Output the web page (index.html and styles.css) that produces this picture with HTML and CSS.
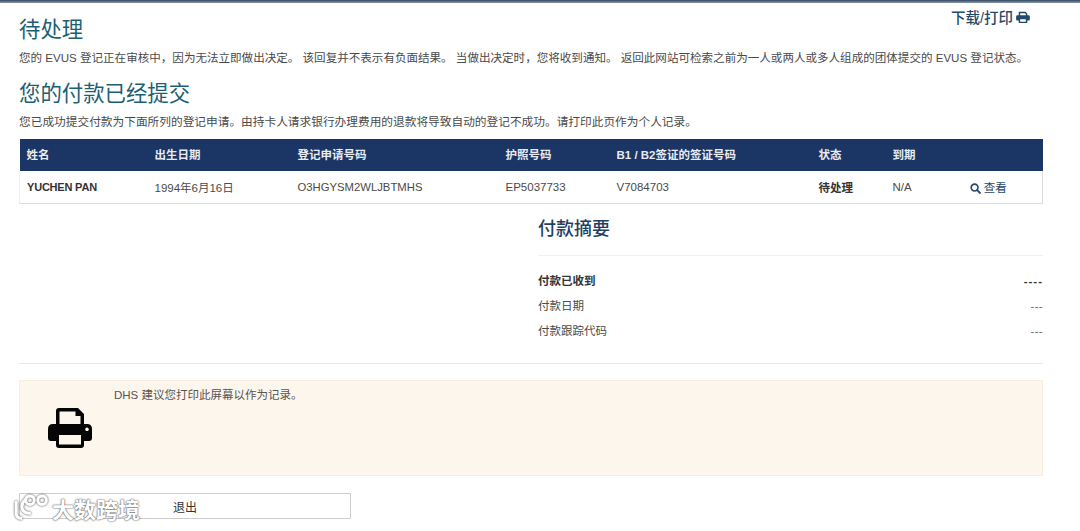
FILE: index.html
```html
<!DOCTYPE html>
<html lang="zh-CN">
<head>
    <meta charset="UTF-8">
    <title>EVUS 待处理</title>
    <link rel="stylesheet" href="styles.css">
</head>
<body>
    <div class="top-bar"></div>

    <div class="page">
        <a class="print-link">下载/打印
            <svg class="print-small" viewBox="0 0 16 14"><path d="M3 5V1h8l2 2v2h1.500q1.500 0 1.500 1.500V10q0 1-1 1h-2v3H3v-3H1q-1 0-1-1V6.500Q0 5 1.500 5zm1.700 0h6.600V3.500L10.500 2.700H4.700zM4.700 9.500v3h6.600v-3z" fill-rule="evenodd"/></svg>
        </a>

        <h1 class="title first">待处理</h1>
        <p class="text wide">您的 EVUS 登记正在审核中，因为无法立即做出决定。 该回复并不表示有负面结果。 当做出决定时，您将收到通知。 返回此网站可检索之前为一人或两人或多人组成的团体提交的 EVUS 登记状态。</p>

        <h1 class="title second">您的付款已经提交</h1>
        <p class="text roomy">您已成功提交付款为下面所列的登记申请。由持卡人请求银行办理费用的退款将导致自动的登记不成功。请打印此页作为个人记录。</p>

        <table class="results">
            <thead>
                <tr>
                    <th class="c-name">姓名</th>
                    <th class="c-dob">出生日期</th>
                    <th class="c-app">登记申请号码</th>
                    <th class="c-pass">护照号码</th>
                    <th class="c-visa">B1 / B2签证的签证号码</th>
                    <th class="c-status">状态</th>
                    <th class="c-exp">到期</th>
                    <th></th>
                </tr>
            </thead>
            <tbody>
                <tr>
                    <td class="strong name">YUCHEN PAN</td>
                    <td>1994年6月16日</td>
                    <td class="code">O3HGYSM2WLJBTMHS</td>
                    <td>EP5037733</td>
                    <td>V7084703</td>
                    <td class="strong">待处理</td>
                    <td>N/A</td>
                    <td class="view">
                        <svg class="search-icon" viewBox="0 0 12 12"><circle cx="5" cy="5" r="3.700" fill="none" stroke="currentColor" stroke-width="1.800"/><path d="M7.800 7.800l3 3" stroke="currentColor" stroke-width="2.200" stroke-linecap="round"/></svg>
                        查看
                    </td>
                </tr>
            </tbody>
        </table>

        <div class="summary">
            <h2>付款摘要</h2>
            <div class="summary-row bold"><span>付款已收到</span><span class="dashes">----</span></div>
            <div class="summary-row"><span>付款日期</span><span class="dashes">---</span></div>
            <div class="summary-row"><span>付款跟踪代码</span><span class="dashes">---</span></div>
        </div>

        <div class="notice">
            <svg class="print-big" viewBox="0 0 44 40"><path fill-rule="evenodd" d="M8 16V3q0-3 3-3h19l6 6v10h3q5 0 5 5v9q0 3-3 3h-5v4q0 3-3 3H11q-3 0-3-3v-4H3q-3 0-3-3v-9q0-5 5-5zm3.500 0h21V8h-5V3.500h-16zM11 27v9.500h22V27zm28-7.500a1.800 1.800 0 1 0 .01 0z"/></svg>
            <p>DHS 建议您打印此屏幕以作为记录。</p>
        </div>

        <button class="logout">退出</button>
    </div>

    <div class="watermark">
        <svg viewBox="0 0 44 32"><g fill="none" stroke="#fff" stroke-width="3.500"><path d="M6 8v14q0 6 7 6M17 6q-7 6-3 13 4 4 9 3"/><circle cx="22" cy="7" r="5"/><circle cx="36" cy="7" r="5"/></g></svg>
        <span>大数跨境</span>
    </div>
</body>
</html>
```

FILE: styles.css
```css
* {
    box-sizing: border-box;
}

html, body {
    margin: 0;
    height: 531px;
    overflow: hidden;
}

body {
    font-family: "Liberation Sans", "Noto Sans CJK SC", sans-serif;
    font-size: 11.500px;
    color: #4a4a4a;
    background: #fff;
    position: relative;
}

.top-bar {
    height: 3px;
    background: linear-gradient(#33475f, #8a9aab);
}

.page {
    padding: 0 37px 0 19px;
    position: relative;
}

.print-link {
    position: absolute;
    right: 50px;
    top: 3px;
    color: #25496b;
    font-size: 14.500px;
    font-weight: 500;
    display: flex;
    align-items: center;
    gap: 3px;
}

.print-small {
    width: 14px;
    height: 12px;
    fill: #25496b;
}

.title {
    margin: 0;
    font-weight: 400;
    color: #1c5f73;
    font-size: 21.400px;
    line-height: 28px;
}

.title.first {
    padding-top: 13px;
}

.title.second {
    margin-top: 14px;
}

.text {
    margin: 6px 0 0;
    line-height: 16px;
}

.text.wide {
    font-size: 11.550px;
}

.text.roomy {
    font-size: 11.700px;
}

.results {
    width: 1024px;
    margin-top: 9px;
    border-collapse: collapse;
    table-layout: fixed;
}

.results th {
    background: #1b3564;
    color: #e8ecf2;
    height: 32px;
    text-align: left;
    font-weight: 700;
    padding: 0 0 2px 8px;
}

.results th:first-child {
    padding-left: 7px;
}

.results td {
    height: 32px;
    padding: 0 0 0 8px;
    border-bottom: 1px solid #ddd;
}

.results td:first-child {
    border-left: 1px solid #eee;
}

.results td:last-child {
    border-right: 1px solid #ddd;
    padding-left: 7px;
}

.c-name { width: 127px; }
.c-dob { width: 143px; }
.c-app { width: 208px; }
.c-pass { width: 111px; }
.c-visa { width: 202px; }
.c-status { width: 74px; }
.c-exp { width: 78px; }

.strong {
    font-weight: 700;
    color: #333;
}

.results .name {
    font-size: 11px;
    padding-left: 7px;
    letter-spacing: -0.200px;
}

.results .code {
    font-size: 11.300px;
}

.view {
    color: #25496b;
}

.search-icon {
    width: 11px;
    height: 11px;
    vertical-align: -2px;
}

.summary {
    margin: 12px 0 0 519px;
    padding-bottom: 19.500px;
}

.summary h2 {
    margin: 0 0 13px;
    font-size: 18px;
    line-height: 26px;
    font-weight: 500;
    color: #1f3f66;
    padding-bottom: 13px;
    border-bottom: 1px solid #f0f0f0;
}

.summary-row {
    display: flex;
    justify-content: space-between;
    height: 25px;
    line-height: 25px;
}

.summary-row.bold {
    font-weight: 700;
    color: #333;
}

.dashes {
    color: #666;
    letter-spacing: 0.300px;
}

.bold .dashes {
    color: #333;
    letter-spacing: 1px;
}

.notice {
    border-top: 1px solid #e8e8e8;
    position: relative;
    padding-top: 16px;
}

.notice::before {
    content: "";
    display: block;
    height: 94px;
    background: #fdf6ec;
    border: 1px solid #f8efe2;
}

.print-big {
    position: absolute;
    left: 29px;
    top: 44px;
    width: 44px;
    height: 40px;
    fill: #050505;
}

.notice p {
    position: absolute;
    left: 95px;
    top: 23px;
    margin: 0;
    line-height: 16px;
    color: #555;
}

.logout {
    display: block;
    width: 332px;
    height: 26px;
    margin-top: 17px;
    background: #fff;
    border: 1px solid #ccc;
    border-radius: 1px;
    font: inherit;
    font-size: 12px;
    color: #333;
}

.watermark {
    position: absolute;
    left: 11px;
    bottom: 7px;
    display: flex;
    align-items: center;
    gap: 3px;
    color: #fff;
    font-size: 22px;
    font-weight: 700;
    text-shadow: 0 0 2px #555, 0 0 1px #555;
}

.watermark svg {
    width: 38px;
    height: 28px;
    filter: drop-shadow(0 0 1px #444);
}
```
